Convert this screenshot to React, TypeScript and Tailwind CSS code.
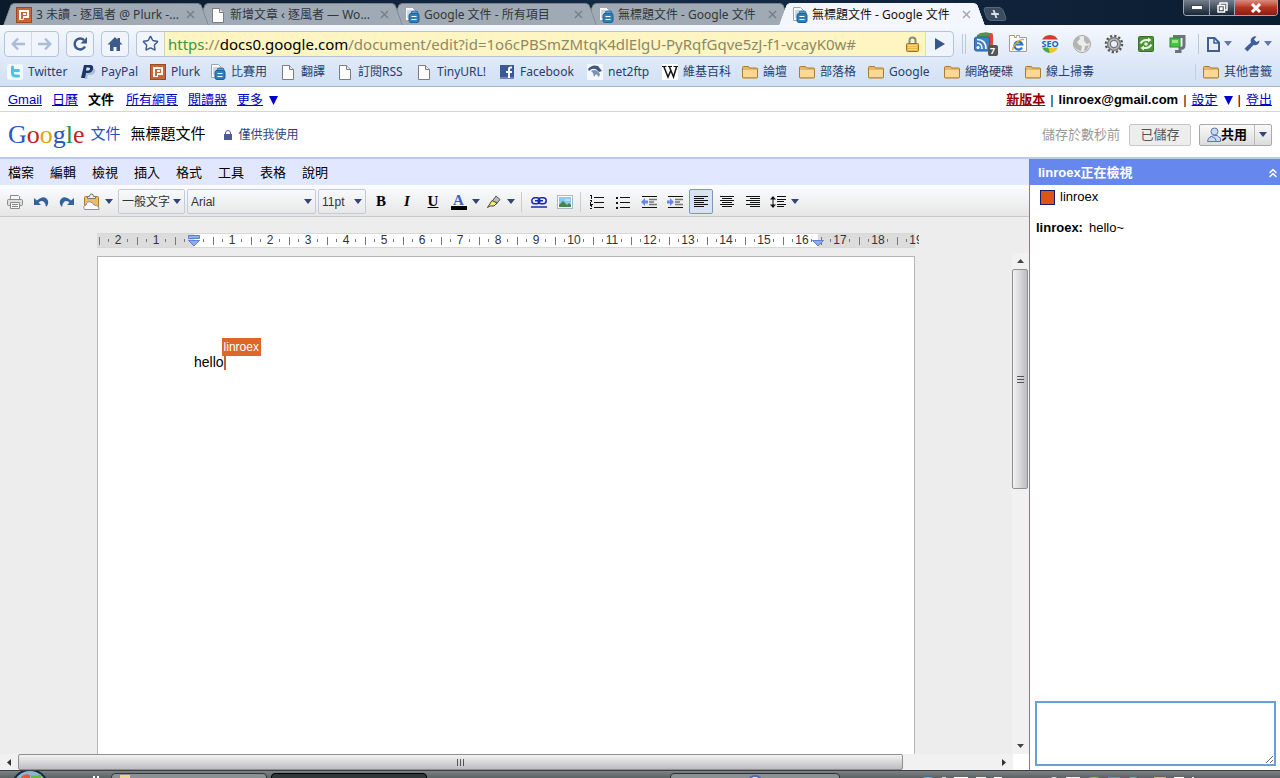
import React from "react";
import { ChevronsUp, Star } from "lucide-react";
import clsx from "clsx";

type IconName = "plurk" | "page" | "docs" | "twitter" | "paypal" | "facebook" | "net2ftp" | "wiki" | "folder";

const tabs: { icon: IconName; title: string; active?: boolean; z: string }[] = [
    { icon: "plurk", title: "3 未讀 - 逐風者 @ Plurk -...", z: "z-[5]" },
    { icon: "page", title: "新增文章 ‹ 逐風者 — Wo...", z: "z-[4]" },
    { icon: "docs", title: "Google 文件 - 所有項目", z: "z-[3]" },
    { icon: "docs", title: "無標題文件 - Google 文件", z: "z-[2]" },
    { icon: "docs", title: "無標題文件 - Google 文件", active: true, z: "z-[6]" },
];

const bookmarks: { icon: IconName; label: string; width: string }[] = [
    { icon: "twitter", label: "Twitter", width: "w-[73px]" },
    { icon: "paypal", label: "PayPal", width: "w-[70px]" },
    { icon: "plurk", label: "Plurk", width: "w-[60px]" },
    { icon: "docs", label: "比賽用", width: "w-[70px]" },
    { icon: "page", label: "翻譯", width: "w-[57px]" },
    { icon: "page", label: "訂閱RSS", width: "w-[79px]" },
    { icon: "page", label: "TinyURL!", width: "w-[83px]" },
    { icon: "facebook", label: "Facebook", width: "w-[88px]" },
    { icon: "net2ftp", label: "net2ftp", width: "w-[75px]" },
    { icon: "wiki", label: "維基百科", width: "w-[80px]" },
    { icon: "folder", label: "論壇", width: "w-[57px]" },
    { icon: "folder", label: "部落格", width: "w-[69px]" },
    { icon: "folder", label: "Google", width: "w-[76px]" },
    { icon: "folder", label: "網路硬碟", width: "w-[81px]" },
    { icon: "folder", label: "線上掃毒", width: "w-[72px]" },
];

const menus = ["檔案", "編輯", "檢視", "插入", "格式", "工具", "表格", "說明"];

// -2 .. 19 cm, one segment per centimetre
const rulerMarks = Array.from({ length: 22 }, (_, i) => i - 2);

function Favicon({ name }: { name: IconName }) {
    if (name === "plurk") {
        return (
            <svg width="16" height="16" viewBox="0 0 16 16" className="shrink-0">
                <rect x="0.5" y="0.5" width="15" height="15" fill="#c8663a" stroke="#9c4a22" />
                <path d="M3 3h10v8H8v2H3z" fill="#fff" />
                <path d="M5 5h6v4H7v3H5z" fill="#c8663a" />
                <path d="M7 6h3v2H7z" fill="#fff" />
            </svg>
        );
    }
    if (name === "page") {
        return (
            <svg width="16" height="16" viewBox="0 0 16 16" className="shrink-0">
                <path d="M2.5 1.5h7l4 4v10h-11z" fill="#fdfdfd" stroke="#7d7d7d" />
                <path d="M9.500 1.500v4h4" fill="#e8e8e8" stroke="#7d7d7d" />
            </svg>
        );
    }
    if (name === "docs") {
        return (
            <svg width="16" height="16" viewBox="0 0 16 16" className="shrink-0">
                <path d="M1.500 0.500h7l3 3v10h-10z" fill="#f7f9fc" stroke="#9ba7b5" />
                <path d="M3 4h5M3 6h3M3 8h2M3 10h2" stroke="#a9b6c6" />
                <rect x="7" y="4" width="7" height="8" rx="2" fill="#5b9ccb" stroke="#2c6c9f" />
                <rect x="5" y="6.500" width="10" height="9" rx="2" fill="#2f7fb8" stroke="#1d5f92" />
                <path d="M7.500 9.500h5M7.500 12.500h5" stroke="#fff" />
            </svg>
        );
    }
    if (name === "twitter") {
        return (
            <svg width="16" height="16" viewBox="0 0 16 16" className="shrink-0">
                <rect width="16" height="16" rx="3" fill="#f2fafe" />
                <path d="M5.500 3v6q0 3 3 3h3M5.500 6.500h6" fill="none" stroke="#4cc3ec" strokeWidth="3" strokeLinecap="round" />
            </svg>
        );
    }
    if (name === "paypal") {
        return (
            <svg width="16" height="16" viewBox="0 0 16 16" className="shrink-0">
                <path d="M7 4h6q3 1 2 4t-5 3H8l-1 4H4z" fill="#a9bfd8" />
                <path d="M4 1h6q4 0 3 4t-5 4H6l-1 5H1z" fill="#1c3568" />
                <path d="M6.500 3.500h2q2 0 1.500 1.500t-2 1.500h-2z" fill="#d9e5f7" />
            </svg>
        );
    }
    if (name === "facebook") {
        return (
            <svg width="16" height="16" viewBox="0 0 16 16" className="shrink-0">
                <rect x="1" y="1" width="14" height="14" fill="#3b5998" />
                <rect x="1" y="13" width="14" height="2" fill="#6d84b4" />
                <path d="M13 3.500h-1.500q-1.500 0-1.500 1.500v9M7 8h6" fill="none" stroke="#fff" strokeWidth="2" />
            </svg>
        );
    }
    if (name === "net2ftp") {
        return (
            <svg width="16" height="16" viewBox="0 0 16 16" className="shrink-0">
                <rect width="16" height="16" fill="#f4f7fb" />
                <path d="M1 5Q5 0 11 2l4 5-3 1-2-2Q6 3 2 7z" fill="#3c5a85" />
                <path d="M4 7q5-3 9 3l-1 3-3-3-2 3-1-4z" fill="#7b92b2" />
            </svg>
        );
    }
    if (name === "wiki") {
        return (
            <svg width="16" height="16" viewBox="0 0 16 16" className="shrink-0">
                <rect width="16" height="16" fill="#fff" />
                <path d="M0 2.500h4.500M6 2.500h4M11.500 2.500H16" stroke="#111" />
                <path d="M2 3l4 10 3-7M7.500 3l4 10 3-10" fill="none" stroke="#111" strokeWidth="1.500" />
            </svg>
        );
    }
    return (
        <svg width="16" height="16" viewBox="0 0 16 16" className="shrink-0">
            <path d="M0.500 13V3.500q0-1 1-1h5l1 1.500h7q1 0 1 1V13q0 1-1 1h-13q-1 0-1-1z" fill="#e9b765" stroke="#a87a33" />
            <path d="M1 6h14v7H1z" fill="#fbd893" />
        </svg>
    );
}

function Caret({ className }: { className?: string }) {
    return (
        <svg width="8" height="5" viewBox="0 0 8 5" className={clsx("shrink-0", className)}>
            <path d="M0 0h8L4 5z" fill="currentColor" />
        </svg>
    );
}

function BrowserTab({ tab }: { tab: (typeof tabs)[number] }) {
    const face = tab.active ? "bg-[#f3f7fd] border-[#f3f7fd]" : "bg-[#a0aab5] border-[#75818f]";
    return (
        <div className={clsx("relative flex h-[22px] w-[206px] -mr-3 shrink-0", tab.z)}>
            <span className={clsx("w-3 origin-bottom -skew-x-[20deg] rounded-tl border-l border-t", face)} />
            <button className={clsx("relative z-10 flex min-w-0 flex-1 items-center border-t pl-px pr-0.5 text-left", face)}>
                <Favicon name={tab.icon} />
                <span className={clsx("ml-1 flex-1 truncate text-xs leading-5", tab.active ? "text-[#111]" : "text-[#30363d]")}>
                    {tab.title}
                </span>
                <svg width="9" height="9" viewBox="0 0 9 9" className="shrink-0">
                    <path d="M1 1l7 7M8 1L1 8" stroke={tab.active ? "#a3a9b0" : "#75808b"} strokeWidth="1.500" />
                </svg>
            </button>
            <span className={clsx("w-3 origin-bottom skew-x-[20deg] rounded-tr border-r border-t", face)} />
        </div>
    );
}

function TitleBar() {
    return (
        <div className="flex h-[25px] items-end justify-between overflow-hidden bg-linear-to-r from-[#0c1b2c] via-[#142a45] to-[#0b1d31]">
            <div className="flex items-end pl-[3px]">
                {tabs.map((tab, i) => (
                    <BrowserTab key={i} tab={tab} />
                ))}
                <button aria-label="New tab" className="mb-1 ml-3 flex h-[14px] w-5 skew-x-[20deg] items-center justify-center rounded-sm border border-[#56677b] bg-[#3c4d61]">
                    <svg width="8" height="8" viewBox="0 0 8 8">
                        <path d="M4 0v8M0 4h8" stroke="#d7dee6" strokeWidth="2" />
                    </svg>
                </button>
            </div>
            <div className="mr-0.5 flex h-4 self-start overflow-hidden rounded-b border border-t-0 border-[#9aa7b5]">
                <button aria-label="Minimize" className="flex w-[26px] items-center justify-center border-r border-[#9aa7b5] bg-linear-to-b from-[#77808c] to-[#1a2737]">
                    <svg width="12" height="5" viewBox="0 0 12 5">
                        <rect x="0.500" y="0.500" width="11" height="4" fill="#fff" stroke="#3b4654" />
                    </svg>
                </button>
                <button aria-label="Restore" className="flex w-[25px] items-center justify-center border-r border-[#9aa7b5] bg-linear-to-b from-[#77808c] to-[#1a2737]">
                    <svg width="11" height="11" viewBox="0 0 11 11" fill="none" stroke="#fff" strokeWidth="1.500">
                        <path d="M3 3V1h7v7H8" />
                        <path d="M1 3.500h6.500V10H1zM3.500 6h1.500v1.500H3.500z" />
                    </svg>
                </button>
                <button aria-label="Close" className="flex w-[42px] items-center justify-center bg-linear-to-b from-[#d98c80] via-[#b83422] to-[#8e1c10]">
                    <svg width="12" height="10" viewBox="0 0 12 10">
                        <path d="M2 1l8 8M10 1L2 9" stroke="#fff" strokeWidth="3" />
                    </svg>
                </button>
            </div>
        </div>
    );
}

const navBox = "flex h-[26px] items-center rounded border border-[#b4c3d9] bg-[#f0f5fc]";

function Extensions() {
    return (
        <div className="flex items-center gap-2">
            <button aria-label="RSS" className="w-6">
                <svg width="24" height="24" viewBox="0 0 24 24">
                    <rect x="5" y="1" width="14" height="14" rx="2" fill="#d9483b" />
                    <path d="M3 3q6-4 13-2l-4 5H3z" fill="#4a9a48" />
                    <rect x="0.500" y="5" width="15" height="14" rx="2" fill="#3f7fc7" stroke="#2a5fa0" />
                    <circle cx="4" cy="15.500" r="1.500" fill="#fff" />
                    <path d="M3 11q5 0 5 6M3 7.500q9 0 9 9.500" fill="none" stroke="#fff" strokeWidth="1.500" />
                    <rect x="14" y="13" width="10" height="11" rx="2" fill="#555" />
                    <text x="16" y="22" fontSize="9" fontWeight="700" fill="#fff">7</text>
                </svg>
            </button>
            <button aria-label="IE Tab" className="flex w-6 justify-center">
                <svg width="20" height="20" viewBox="0 0 20 20">
                    <path d="M1.500 3.500v-2h5v2h2v-2h3v2h7v14h-17z" fill="#fcfcfa" stroke="#a99c86" />
                    <path d="M14 13.500a4 4 0 1 1 .3-3H7" fill="none" stroke="#2476c8" strokeWidth="2.200" />
                    <path d="M5 16Q4 13 9 8.500T16 6" fill="none" stroke="#dca92e" strokeWidth="1.500" />
                </svg>
            </button>
            <button aria-label="SEO" className="flex w-6 justify-center">
                <svg width="20" height="20" viewBox="0 0 20 20">
                    <path d="M1.500 7a9 9 0 0 1 17 0z" fill="#d8392b" />
                    <path d="M2 13h16a9 9 0 0 1-8 6z" fill="#f2c42c" />
                    <path d="M2 13h6l2 6a9 9 0 0 1-8-6z" fill="#4da644" />
                    <rect y="5.500" width="20" height="8" rx="3" fill="#e9f3ff" />
                    <text x="10" y="13" fontSize="9" fontWeight="700" fill="#1a65c0" textAnchor="middle">SEO</text>
                </svg>
            </button>
            <button aria-label="Globe" className="flex w-6 justify-center">
                <svg width="20" height="20" viewBox="0 0 20 20">
                    <circle cx="10" cy="10" r="8.500" fill="#ececec" stroke="#a5a5a5" />
                    <path d="M2 7q1-4 5-5l1 3-3 3 2 3 3 1-1 5q-5-1-7-5zM12 2q5 2 6 7l-3 1-3-3zM13 12l4-1-2 5-3 1z" fill="#b4b4b4" />
                </svg>
            </button>
            <button aria-label="Settings" className="flex w-6 justify-center">
                <svg width="20" height="20" viewBox="0 0 20 20" fill="none">
                    <circle cx="10" cy="10" r="8" stroke="#555" strokeWidth="2.500" strokeDasharray="2.200 1.990" />
                    <circle cx="10" cy="10" r="5" stroke="#777" strokeWidth="4" />
                    <circle cx="10" cy="10" r="5" stroke="#b9b9b9" strokeWidth="1.500" />
                </svg>
            </button>
            <button aria-label="Sync" className="flex w-6 justify-center">
                <svg width="18" height="18" viewBox="0 0 18 18">
                    <rect x="1.500" y="1.500" width="15" height="15" rx="1" fill="#4f8f3b" stroke="#37702a" />
                    <path d="M3.500 8.500q2-3.500 5.500-3.500h3M14.500 9.500q-2 3.500-5.500 3.500H6" fill="none" stroke="#e6f5dd" strokeWidth="2" />
                    <path d="M11 2.500l3.500 2.500L11 7.500zM7 10.500L3.500 13 7 15.500z" fill="#e6f5dd" />
                    <circle cx="9" cy="9" r="1.800" fill="#e6f5dd" />
                </svg>
            </button>
            <button aria-label="Download" className="flex w-6 justify-center">
                <svg width="18" height="20" viewBox="0 0 18 20">
                    <path d="M4 2.500h11v9q0 3-4 3v3H6" fill="none" stroke="#6d737b" strokeWidth="3" />
                    <rect x="1" y="4" width="10" height="9" fill="#45c341" stroke="#2f8c31" />
                    <path d="M3 6h6v3H3z" fill="#9be58d" />
                </svg>
            </button>
        </div>
    );
}

function NavBar() {
    return (
        <div className="flex h-[35px] items-center bg-linear-to-b from-[#f5f8fd] to-[#dfe9f8] pl-1 pt-0.5">
            <div className={navBox}>
                <button aria-label="Back" className="flex h-full w-[27px] items-center justify-center border-r border-[#cfdbea]">
                    <svg width="14" height="14" viewBox="0 0 14 14" fill="none" stroke="#a9bddb" strokeWidth="2.500">
                        <path d="M14 7H2M7 1.500L1.800 7 7 12.500" />
                    </svg>
                </button>
                <button aria-label="Forward" className="flex h-full w-[26px] items-center justify-center">
                    <svg width="14" height="14" viewBox="0 0 14 14" fill="none" stroke="#a9bddb" strokeWidth="2.500">
                        <path d="M0 7h12M7 1.500L12.200 7 7 12.500" />
                    </svg>
                </button>
            </div>
            <button aria-label="Reload" className={clsx(navBox, "ml-[7px] w-7 justify-center")}>
                <svg width="16" height="16" viewBox="0 0 16 16">
                    <path d="M13 10.500A5.500 5.500 0 1 1 12 4" fill="none" stroke="#3d5a8c" strokeWidth="2.500" />
                    <path d="M15 1v6.500H8.500z" fill="#3d5a8c" />
                </svg>
            </button>
            <button aria-label="Home" className={clsx(navBox, "ml-[7px] w-7 justify-center")}>
                <svg width="16" height="16" viewBox="0 0 16 16" fill="#3d5a8c">
                    <path d="M8 1L0.500 8.500H3V15h3.500v-4h3v4H13V8.500h2.500L13 6V2h-2.500v1.500z" />
                </svg>
            </button>
            <div className={clsx(navBox, "ml-[7px] min-w-0 flex-1 overflow-hidden")}>
                <button aria-label="Bookmark this page" className="flex h-full w-[27px] shrink-0 items-center justify-center text-[#3d5a8c]">
                    <Star size={17} strokeWidth={2} />
                </button>
                <div className="flex h-full min-w-0 flex-1 items-center border-l border-[#d8d3b4] bg-[#fff5c3] pl-[3px] pr-1.5">
                    <a href="#url" className="min-w-0 flex-1 truncate text-[15px] leading-6 text-[#8b8a67]">
                        <span className="text-[#3a983a]">https</span>://<span className="text-black">docs0.google.com</span>
                        /document/edit?id=1o6cPBSmZMtqK4dlElgU-PyRqfGqve5zJ-f1-vcayK0w#
                    </a>
                    <svg width="13" height="16" viewBox="0 0 13 16" className="shrink-0">
                        <path d="M3.500 8V4.500a3 3 0 0 1 6 0V8" fill="none" stroke="#8a8a82" strokeWidth="2" />
                        <rect x="0.500" y="7.500" width="12" height="8" rx="1" fill="#e9b54c" stroke="#9b7326" />
                        <path d="M2 9.500h9M2 11.500h9M2 13.500h9" stroke="#f8db94" />
                    </svg>
                </div>
                <button aria-label="Go" className="flex h-full w-7 shrink-0 items-center justify-center border-l border-[#cfdbea]">
                    <svg width="10" height="12" viewBox="0 0 10 12">
                        <path d="M0 0l10 6-10 6z" fill="#36558c" />
                    </svg>
                </button>
            </div>
            <span className="ml-2 mr-2 h-5 w-1 border-x border-[#b9c8de]" />
            <Extensions />
            <span className="ml-2 h-5 border-l border-[#b9c8de]" />
            <button aria-label="Page menu" className="ml-2 flex items-center gap-1 text-[#6279a3]">
                <svg width="13" height="16" viewBox="0 0 13 16" fill="none" stroke="#3f5f96" strokeWidth="2">
                    <path d="M1 2h6.500L12 6.500V15H1z" />
                    <path d="M7 2v5h5" strokeWidth="1.500" />
                </svg>
                <Caret />
            </button>
            <button aria-label="Tools menu" className="ml-3 mr-2 flex items-center gap-1 text-[#6279a3]">
                <svg width="16" height="16" viewBox="0 0 16 16" fill="#3f5f96">
                    <path d="M15.500 4.500a4.500 4.500 0 0 1-6 4.500l-6 6.500-3-3L7 6.500A4.500 4.500 0 0 1 12.500 0.500L10 3.500 12.500 6z" />
                </svg>
                <Caret />
            </button>
        </div>
    );
}

function BookmarkBar() {
    return (
        <nav className="flex h-[27px] items-center border-b border-[#a9b5c6] bg-linear-to-b from-[#dfe9f8] to-[#d2e0f5] pb-1 pl-[7px] pr-2 pt-0.5 text-xs text-[#27406f]">
            {bookmarks.map((b) => (
                <a key={b.label} href="#bookmark" className={clsx("flex shrink-0 items-center gap-[5px] whitespace-nowrap", b.width)}>
                    <Favicon name={b.icon} />
                    {b.label}
                </a>
            ))}
            <a href="#other" className="ml-auto flex shrink-0 items-center gap-[5px] border-l border-[#c2d0e4] pl-[7px]">
                <Favicon name="folder" />
                其他書籤
            </a>
        </nav>
    );
}

const link = "text-[#0000cc] underline";

function AccountBar() {
    return (
        <div className="flex h-[25px] items-center justify-between border-b border-[#c9d7f1] px-2 pt-0.5 text-[13px] leading-5">
            <div className="flex items-center gap-2.5">
                <a href="#gmail" className={link}>Gmail</a>
                <a href="#calendar" className={link}>日曆</a>
                <b>文件</b>
                <a href="#sites" className={clsx(link, "ml-0.5")}>所有網頁</a>
                <a href="#reader" className={link}>閱讀器</a>
                <a href="#more" className="flex items-center gap-1.5 text-[#0000cc]">
                    <span className="underline">更多</span>
                    <svg width="9" height="9" viewBox="0 0 9 9"><path d="M0 0h9L4.500 9z" fill="#0000cc" /></svg>
                </a>
            </div>
            <div className="flex items-center gap-[5px]">
                <a href="#new" className="font-bold text-[#990000] underline">新版本</a>
                <span>|</span>
                <b>linroex@gmail.com</b>
                <span>|</span>
                <a href="#settings" className="flex items-center gap-1.5 text-[#0000cc]">
                    <span className="underline">設定</span>
                    <svg width="9" height="9" viewBox="0 0 9 9"><path d="M0 0h9L4.500 9z" fill="#0000cc" /></svg>
                </a>
                <span>|</span>
                <a href="#logout" className={link}>登出</a>
            </div>
        </div>
    );
}

function DocHeader() {
    return (
        <header className="flex h-[47px] items-center border-b-2 border-[#b9c9ef] px-2">
            <a href="#home" className="flex items-center">
                <span className="font-['Liberation_Serif',serif] text-[26px] leading-8">
                    <span className="text-[#2a56c6]">G</span>
                    <span className="text-[#c5221f]">o</span>
                    <span className="text-[#e0a800]">o</span>
                    <span className="text-[#2a56c6]">g</span>
                    <span className="text-[#1e8e3e]">l</span>
                    <span className="text-[#c5221f]">e</span>
                </span>
                <span className="ml-1.5 text-[15px] text-[#1f4fc0]">文件</span>
            </a>
            <h1 className="ml-2.5 text-[15px]">無標題文件</h1>
            <button className="ml-[18px] flex items-center gap-[7px] text-xs text-[#31457c]">
                <svg width="8" height="10" viewBox="0 0 8 10">
                    <path d="M1.500 5V3a2.500 2.500 0 0 1 5 0v2" fill="none" stroke="#4f5a9a" />
                    <rect y="4" width="8" height="6" fill="#4f5a9a" />
                </svg>
                僅供我使用
            </button>
            <span className="ml-auto text-[13px] text-[#999]">儲存於數秒前</span>
            <button disabled className="ml-[9px] h-[22px] w-[62px] rounded-xs border border-[#c6c6c6] bg-[#ededed] text-[13px] leading-5 text-[#555]">
                已儲存
            </button>
            <div className="ml-2 flex h-[22px] rounded-xs border border-[#aaa] bg-linear-to-b from-[#fafafa] to-[#dcdcdc] text-[13px] font-bold leading-5">
                <button className="flex w-[55px] items-center justify-center border-r border-[#bbb]">
                    <svg width="14" height="16" viewBox="0 0 14 16" fill="#c9d9f3" stroke="#5a78ab">
                        <path d="M3 9.500q3 0 3.500-1l4 0q.5 1.500 3 2.500v3.500H4.500" />
                        <circle cx="7.500" cy="4.500" r="3.500" />
                        <path d="M0.500 14.500q0-4 4-5 4 .5 5 5z" />
                    </svg>
                    共用
                </button>
                <button aria-label="Share options" className="flex w-4 items-center justify-center text-[#31457c]">
                    <Caret />
                </button>
            </div>
        </header>
    );
}

function ToolButton({ label, width = "w-[26px]", active, children }: { label: string; width?: string; active?: boolean; children: React.ReactNode }) {
    return (
        <button
            aria-label={label}
            className={clsx(
                "flex h-[25px] shrink-0 items-center justify-center gap-[5px] text-[#31457c]",
                active ? "w-6 mx-px rounded-xs border border-[#7f96c0] bg-[#d9e2f3]" : width,
            )}
        >
            {children}
        </button>
    );
}

function ToolSelect({ label, value, width }: { label: string; value: string; width: string }) {
    return (
        <label className={clsx("relative mr-0.5 flex h-[25px] shrink-0 items-center text-[#31457c]", width)}>
            <select aria-label={label} className="h-full w-full appearance-none rounded-xs border border-[#c2cbdc] bg-transparent pl-[3px] text-xs text-[#333]">
                <option>{value}</option>
            </select>
            <Caret className="pointer-events-none absolute right-1" />
        </label>
    );
}

function Lines({ rows }: { rows: string }) {
    return (
        <svg width="16" height="14" viewBox="0 0 16 14" shapeRendering="crispEdges">
            <path d={rows} stroke="#111" fill="none" />
        </svg>
    );
}

function Toolbar() {
    return (
        <div className="flex h-8 shrink-0 items-center overflow-hidden border-b border-[#c8c8c8] bg-linear-to-b from-[#fcfdff] to-[#e6e6e6] pl-0.5 pt-0.5">
            <ToolButton label="列印">
                <svg width="16" height="16" viewBox="0 0 16 16" fill="#f5f5f5" stroke="#8b8b8b">
                    <path d="M3.500 5V1.500h8l1 1V5" />
                    <rect x="0.500" y="5.500" width="15" height="6" rx="1" fill="#dedede" />
                    <path d="M3.500 8.500h9v6h-9zM5 10.500h6M5 12.500h6" />
                </svg>
            </ToolButton>
            <ToolButton label="復原">
                <svg width="16" height="12" viewBox="0 0 16 12">
                    <path d="M1 2v7h7L5.500 6.500Q9 4 11 6t2 5q4-4 1-8T4 4.500z" fill="#33619e" />
                </svg>
            </ToolButton>
            <ToolButton label="重做">
                <svg width="16" height="12" viewBox="0 0 16 12">
                    <path d="M15 2v7H8l2.500-2.500Q7 4 5 6T3 11q-4-4-1-8t10 1.500z" fill="#33619e" />
                </svg>
            </ToolButton>
            <ToolButton label="剪貼簿" width="w-9">
                <svg width="17" height="17" viewBox="0 0 17 17">
                    <rect x="1.500" y="3.500" width="14" height="12" rx="1" fill="#f0bb63" stroke="#a97a35" />
                    <path d="M4.500 5.500v-2h2q0-2.500 2-2.500t2 2.500h2v2z" fill="#eee" stroke="#777" />
                    <path d="M1.500 16.500q-2-3.500 1.500-4.500 1-4 4.500-3t3.500 3q5 0 5 4.500z" fill="#fff" stroke="#8d8d9c" />
                </svg>
                <Caret />
            </ToolButton>
            <span className="w-0.5 shrink-0" />
            <ToolSelect label="樣式" value="一般文字" width="w-[67px]" />
            <ToolSelect label="字型" value="Arial" width="w-[129px]" />
            <ToolSelect label="字型大小" value="11pt" width="w-12" />
            <ToolButton label="粗體">
                <span className="font-['Liberation_Serif',serif] text-[15px] font-bold text-black">B</span>
            </ToolButton>
            <ToolButton label="斜體">
                <span className="font-['Liberation_Serif',serif] text-[15px] font-bold italic text-black">I</span>
            </ToolButton>
            <ToolButton label="底線">
                <span className="font-['Liberation_Serif',serif] text-[15px] font-bold text-black underline">U</span>
            </ToolButton>
            <ToolButton label="文字顏色" width="w-[38px]">
                <span className="w-4 border-b-4 border-black text-center font-['Liberation_Serif',serif] text-[15px] font-bold leading-3 text-[#3a63c0]">A</span>
                <Caret />
            </ToolButton>
            <ToolButton label="醒目提示" width="w-[34px]">
                <svg width="15" height="13" viewBox="0 0 15 13">
                    <path d="M9 1l4 3.500-4 5-4-3z" fill="#bbb" stroke="#555" />
                    <path d="M5 5.500L10 8l-3 3H3l-2.500 1.500z" fill="#f4ef6a" stroke="#444" />
                </svg>
                <Caret />
            </ToolButton>
            <span className="mx-[3px] h-5 w-0.5 shrink-0 border-l border-[#ccc]" />
            <ToolButton label="連結">
                <svg width="16" height="12" viewBox="0 0 16 12" fill="none" stroke="#1a28b8" strokeWidth="1.500">
                    <rect x="0.800" y="1.800" width="8" height="6" rx="3" />
                    <rect x="7.200" y="1.800" width="8" height="6" rx="3" />
                    <path d="M4 4.800h8M0 11h16" />
                </svg>
            </ToolButton>
            <ToolButton label="圖片">
                <svg width="16" height="14" viewBox="0 0 16 14">
                    <rect x="0.500" y="0.500" width="15" height="13" fill="#fff" stroke="#a9b7c6" />
                    <rect x="2" y="2" width="12" height="10" fill="#8ec8ee" />
                    <path d="M2 10l4-4 4 4 2-2 2 2v2H2z" fill="#3f8a46" />
                    <path d="M8 5h5" stroke="#e5f5fd" />
                </svg>
            </ToolButton>
            <span className="ml-0.5 mr-[3px] h-5 w-px shrink-0 bg-[#ccc]" />
            <ToolButton label="編號清單">
                <Lines rows="M5 2.500h10M5 7.500h10M5 12.500h10M1 0.500h1M2.500 0v4M1 5.500h2M2.500 6v1M1.500 7v2M1 9.500h3M1 10.500h2M2.500 11v1M1 13.500h2" />
            </ToolButton>
            <ToolButton label="項目清單">
                <Lines rows="M5 2.500h10M5 7.500h10M5 12.500h10M1 2h2M1 3h2M1 7h2M1 8h2M1 12h2M1 13h2" />
            </ToolButton>
            <ToolButton label="減少縮排">
                <svg width="16" height="14" viewBox="0 0 16 14">
                    <path d="M1 1.500h15M1 12.500h15" stroke="#111" />
                    <path d="M8 4.500h8M8 7h5M8 9.500h8" stroke="#777" strokeWidth="1.500" />
                    <path d="M0 7l4-4v2.500h3v3H4V11z" fill="#6a86f0" />
                </svg>
            </ToolButton>
            <ToolButton label="增加縮排">
                <svg width="16" height="14" viewBox="0 0 16 14">
                    <path d="M1 1.500h15M1 12.500h15" stroke="#111" />
                    <path d="M8 4.500h8M8 7h5M8 9.500h8" stroke="#777" strokeWidth="1.500" />
                    <path d="M7 7L3 3v2.500H0v3h3V11z" fill="#6a86f0" />
                </svg>
            </ToolButton>
            <ToolButton label="靠左對齊" active>
                <Lines rows="M1 1.500h14M1 3.500h10M1 5.500h14M1 7.500h10M1 9.500h14M1 11.500h10" />
            </ToolButton>
            <ToolButton label="置中對齊">
                <Lines rows="M1 1.500h14M3 3.500h10M1 5.500h14M3 7.500h10M1 9.500h14M3 11.500h10" />
            </ToolButton>
            <ToolButton label="靠右對齊">
                <Lines rows="M1 1.500h14M5 3.500h10M1 5.500h14M5 7.500h10M1 9.500h14M5 11.500h10" />
            </ToolButton>
            <ToolButton label="行距" width="w-9">
                <svg width="16" height="14" viewBox="0 0 16 14">
                    <path d="M7 1.500h9M7 4.500h9M7 6.500h7M7 9.500h9M7 11.500h7" stroke="#111" />
                    <path d="M3 2v10" stroke="#111" />
                    <path d="M0 4.500L3 1l3 3.500zM0 9.500L3 13l3-3.500z" fill="#111" />
                </svg>
                <Caret />
            </ToolButton>
        </div>
    );
}

function Ruler() {
    return (
        <div className="relative mx-auto h-[15px] w-[818px] border-y border-[#d8d8d8] bg-[linear-gradient(to_right,#dcdcdc_97px,#fff_97px,#fff_721px,#dcdcdc_721px)] pl-0.5">
            <div className="flex w-[820px] overflow-hidden">
                {rulerMarks.map((n) => (
                    <div key={n} className="flex h-[13px] w-[38px] shrink-0 items-center text-xs leading-[13px] text-[#333]">
                        <span className="h-2 w-px bg-[#777]" />
                        <span className="ml-2 h-[3px] w-px bg-[#777]" />
                        <span className="mx-px w-4 text-center">{n === 0 ? "" : Math.abs(n)}</span>
                        <span className="h-[3px] w-px bg-[#777]" />
                    </div>
                ))}
            </div>
            <svg width="12" height="13" viewBox="0 0 12 13" className="absolute left-[91px] top-0">
                <path d="M0.500 1.500h11v3h-11zM0.500 6.500h11L6 12z" fill="#8fabf5" stroke="#5f80d8" />
            </svg>
            <svg width="12" height="13" viewBox="0 0 12 13" className="absolute left-[715px] top-0">
                <path d="M0.500 6.500h11L6 12z" fill="#8fabf5" stroke="#5f80d8" />
            </svg>
        </div>
    );
}

function Canvas() {
    return (
        <div className="flex min-h-0 flex-1 bg-[#ededed]">
            <div className="flex min-w-0 flex-1 flex-col overflow-hidden pt-4">
                <Ruler />
                <article className="mx-auto mt-2 w-[818px] flex-1 border border-b-0 border-[#b5b5b5] bg-white pl-24 pt-24">
                    <p className="flex items-start text-sm leading-[18px]">
                        hello
                        <span className="relative h-[17px] w-0.5 bg-[#c9622f]">
                            <span className="absolute -left-0.5 bottom-[14px] bg-[#dd6629] px-0.5 text-xs leading-[18px] text-white">
                                linroex
                            </span>
                        </span>
                    </p>
                </article>
            </div>
            <div className="mt-9 flex w-[17px] shrink-0 flex-col bg-[#f1f1f1] pr-px">
                <button aria-label="Scroll up" className="flex h-4 shrink-0 items-center justify-center">
                    <svg width="7" height="4" viewBox="0 0 7 4"><path d="M0 4h7L3.500 0z" fill="#444" /></svg>
                </button>
                <div className="flex min-h-0 flex-1 flex-col">
                    <div className="flex h-[47%] items-center justify-center rounded-xs border border-[#8f8f8f] bg-linear-to-r from-[#f3f3f3] to-[#bdbdc1]">
                        <span className="h-[7px] w-[7px] bg-[repeating-linear-gradient(#555_0_1px,transparent_1px_3px)]" />
                    </div>
                </div>
                <button aria-label="Scroll down" className="flex h-4 shrink-0 items-center justify-center">
                    <svg width="7" height="4" viewBox="0 0 7 4"><path d="M0 0h7L3.500 4z" fill="#444" /></svg>
                </button>
            </div>
        </div>
    );
}

function HorizontalScroll() {
    return (
        <div className="flex h-4 shrink-0 bg-white pr-4">
            <div className="flex flex-1 bg-[#f1f1f1]">
                <button aria-label="Scroll left" className="flex w-[18px] items-center justify-center">
                    <svg width="4" height="7" viewBox="0 0 4 7"><path d="M4 0v7L0 3.500z" fill="#333" /></svg>
                </button>
                <div className="flex min-w-0 flex-1">
                    <div className="flex w-[90.6%] items-center justify-center rounded-xs border border-[#8f8f8f] bg-linear-to-b from-[#f3f3f3] to-[#bdbdc1]">
                        <span className="h-[7px] w-[7px] bg-[repeating-linear-gradient(to_right,#555_0_1px,transparent_1px_3px)]" />
                    </div>
                </div>
                <button aria-label="Scroll right" className="flex w-[18px] items-center justify-center">
                    <svg width="4" height="7" viewBox="0 0 4 7"><path d="M0 0v7l4-3.500z" fill="#333" /></svg>
                </button>
            </div>
        </div>
    );
}

function ChatPanel() {
    return (
        <aside className="flex w-[251px] shrink-0 flex-col border-l border-[#5f86cc] bg-white text-[13px]">
            <div className="flex h-[26px] items-center justify-between bg-[#6688ee] pl-2 pt-0.5 font-bold text-white">
                linroex正在檢視
                <button aria-label="Collapse">
                    <ChevronsUp size={14} strokeWidth={2.5} />
                </button>
            </div>
            <div className="flex h-6 items-center gap-[5px] pl-2.5">
                <span className="size-[15px] border border-[#1a1a6a] bg-[#dd5511]" />
                linroex
            </div>
            <p className="flex flex-1 gap-1.5 pl-1.5 pt-[9px] leading-5">
                <b>linroex:</b> hello~
            </p>
            <textarea aria-label="Chat message" className="mb-1 ml-[5px] mr-1 h-[65px] border-2 border-[#6a9fd8] bg-white outline-none" />
        </aside>
    );
}

function Taskbar() {
    return (
        <footer className="flex h-2 shrink-0 items-start overflow-hidden border-t border-[#3c4042] bg-linear-to-b from-[#7d8284] to-[#5c6163]">
            <button aria-label="Start" className="ml-[11px] h-2 w-[38px]">
                <svg width="38" height="38" viewBox="0 0 38 38">
                    <circle cx="19" cy="17" r="18" fill="#8db4d2" stroke="#13293f" strokeWidth="2" />
                    <path d="M10 6q4-4 9-2v6h-9z" fill="#e25a2c" />
                    <path d="M20 4q6 2 10-1v7H20z" fill="#6fb53a" />
                </svg>
            </button>
            <span className="ml-11 mt-[5px] flex gap-0.5">
                <i className="size-0.5 bg-white" />
                <i className="size-0.5 bg-white" />
            </span>
            <button aria-label="Folder window" className="ml-3 mt-0.5 h-8 w-[156px] rounded border border-[#33383a] bg-[#8c9092] pl-2">
                <span className="mb-6 block h-1 w-2.5 bg-[#e9d58c]" />
            </button>
            <button aria-label="Browser window" className="ml-1 mt-0.5 h-8 w-[156px] rounded border border-black bg-[#333638]" />
            <span className="ml-auto mr-[82px] mt-0.5 flex h-8 w-[170px] justify-center rounded border border-[#2d3133] bg-[#8c9092]">
                <i className="mt-px size-4 rounded-full border-2 border-[#5569b8] bg-[#e9eefb]" />
            </span>
            <span className="mr-[86px] mt-1.5 flex items-start gap-2">
                <i className="h-2 w-3 rounded-t bg-[#57aee6]" />
                <i className="h-2 w-1 bg-[#ddd]" />
                <i className="h-2 w-3.5 border border-white bg-[#5c6163]" />
                <i className="h-2 w-2.5 bg-[#eee]" />
                <i className="mr-10 h-2 w-2 border border-white" />
                <i className="h-2 w-2 rounded-t bg-[#e8e8e8]" />
                <i className="h-2 w-3.5 bg-[#eee]" />
                <i className="h-2 w-3 rounded-t bg-[#9ccc3c]" />
                <i className="h-2 w-3 bg-[#4a9be0]" />
                <i className="h-2 w-2.5 rounded-t bg-[#56c6ae]" />
                <i className="ml-2 h-2 w-3 bg-[#c9b93b]" />
                <i className="h-2 w-2.5 border border-white" />
                <i className="h-2 w-0.5 bg-white" />
            </span>
        </footer>
    );
}

export default function App() {
    return (
        <div className="flex h-screen flex-col overflow-hidden bg-white font-['Liberation_Sans','Noto_Sans_CJK_TC',sans-serif] text-black">
            <div className="shrink-0 font-['Noto_Sans','Noto_Sans_CJK_TC',sans-serif]">
                <TitleBar />
                <NavBar />
                <BookmarkBar />
            </div>
            <div className="shrink-0">
                <AccountBar />
                <DocHeader />
            </div>
            <main className="flex min-h-0 flex-1">
                <section className="flex min-w-0 flex-1 flex-col">
                    <nav className="flex h-[26px] shrink-0 items-center bg-[#e0e7ff] pt-0.5 text-[13px]">
                        {menus.map((m) => (
                            <button key={m} className="h-full px-2">{m}</button>
                        ))}
                    </nav>
                    <Toolbar />
                    <Canvas />
                    <HorizontalScroll />
                </section>
                <ChatPanel />
            </main>
            <Taskbar />
        </div>
    );
}
